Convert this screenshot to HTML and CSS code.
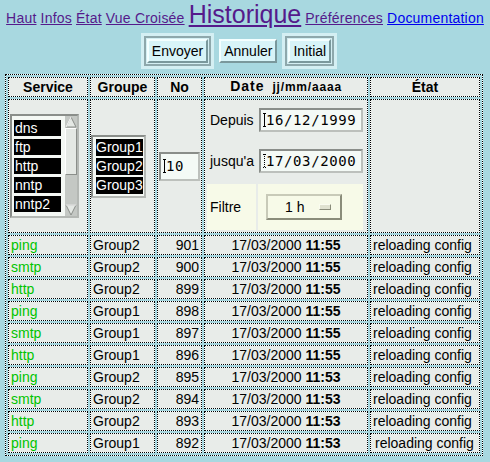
FILE: index.html
```html
<!DOCTYPE html>
<html lang="fr">
<head>
    <meta charset="UTF-8">
    <title>Historique</title>
    <link rel="stylesheet" href="styles.css">
</head>
<body>
    <div class="nav">
        <a href="#">Haut</a> <a href="#">Infos</a> <a href="#">État</a> <a href="#">Vue Croisée</a> <a href="#" class="current">Historique</a> <a href="#">Préférences</a> <a href="#" class="fresh">Documentation</a>
    </div>

    <form class="actions">
        <span class="frame"><span class="ring"><button type="submit">Envoyer</button></span></span>
        <button type="button">Annuler</button>
        <span class="frame"><span class="ring"><button type="reset">Initial</button></span></span>
    </form>

    <table class="histo">
        <colgroup>
            <col style="width: 80px">
            <col style="width: 65px">
            <col style="width: 45px">
            <col style="width: 164px">
            <col style="width: 110px">
        </colgroup>
        <thead>
            <tr>
                <th>Service</th>
                <th>Groupe</th>
                <th>No</th>
                <th><span class="date-title">Date</span><span class="fmt">jj/mm/aaaa</span></th>
                <th>État</th>
            </tr>
        </thead>
        <tbody>
            <tr class="filters">
                <td>
                    <div class="listbox">
                        <div class="opts">
                            <span>dns</span>
                            <span>ftp</span>
                            <span>http</span>
                            <span>nntp</span>
                            <span>nntp2</span>
                        </div>
                        <div class="scroll">
                            <svg class="arrow" width="12" height="12" viewBox="0 0 12 12"><polygon points="6,1 11,11 1,11" fill="#e4e8e4" stroke="#8a8e8a"/><line x1="6" y1="1" x2="1" y2="11" stroke="#fff"/></svg>
                            <div class="track"><div class="thumb"></div></div>
                            <svg class="arrow" width="12" height="12" viewBox="0 0 12 12"><polygon points="1,1 11,1 6,11" fill="#e4e8e4" stroke="#8a8e8a"/><line x1="1" y1="1" x2="11" y2="1" stroke="#fff"/></svg>
                        </div>
                    </div>
                </td>
                <td class="groups-cell">
                    <div class="listbox groups">
                        <div class="opts">
                            <span>Group1</span>
                            <span>Group2</span>
                            <span>Group3</span>
                        </div>
                    </div>
                </td>
                <td>
                    <div class="field count"><i class="caret"></i>10</div>
                </td>
                <td class="period-cell">
                    <table class="period">
                        <tr class="r1">
                            <td class="lbl">Depuis</td>
                            <td class="fld"><div class="field date"><i class="caret"></i>16/12/1999</div></td>
                        </tr>
                        <tr class="r2">
                            <td class="lbl">jusqu'a</td>
                            <td class="fld"><div class="field date"><i class="caret idle"></i>17/03/2000</div></td>
                        </tr>
                        <tr class="r3">
                            <td class="lbl">Filtre</td>
                            <td class="fld"><span class="menu">1 h<i class="ind"></i></span></td>
                        </tr>
                    </table>
                </td>
                <td></td>
            </tr>
            <tr><td class="svc">ping</td><td>Group2</td><td class="num">901</td><td class="when">17/03/2000 <b>11:55</b></td><td>reloading config</td></tr>
            <tr><td class="svc">smtp</td><td>Group2</td><td class="num">900</td><td class="when">17/03/2000 <b>11:55</b></td><td>reloading config</td></tr>
            <tr><td class="svc">http</td><td>Group2</td><td class="num">899</td><td class="when">17/03/2000 <b>11:55</b></td><td>reloading config</td></tr>
            <tr><td class="svc">ping</td><td>Group1</td><td class="num">898</td><td class="when">17/03/2000 <b>11:55</b></td><td>reloading config</td></tr>
            <tr><td class="svc">smtp</td><td>Group1</td><td class="num">897</td><td class="when">17/03/2000 <b>11:55</b></td><td>reloading config</td></tr>
            <tr><td class="svc">http</td><td>Group1</td><td class="num">896</td><td class="when">17/03/2000 <b>11:55</b></td><td>reloading config</td></tr>
            <tr><td class="svc">ping</td><td>Group2</td><td class="num">895</td><td class="when">17/03/2000 <b>11:53</b></td><td>reloading config</td></tr>
            <tr><td class="svc">smtp</td><td>Group2</td><td class="num">894</td><td class="when">17/03/2000 <b>11:53</b></td><td>reloading config</td></tr>
            <tr><td class="svc">http</td><td>Group2</td><td class="num">893</td><td class="when">17/03/2000 <b>11:53</b></td><td>reloading config</td></tr>
            <tr><td class="svc">ping</td><td>Group1</td><td class="num">892</td><td class="when">17/03/2000 <b>11:53</b></td><td class="last">reloading config</td></tr>
        </tbody>
    </table>
</body>
</html>
```

FILE: styles.css
```css
* {
    box-sizing: border-box;
}
body {
    margin: 0 5px;
    background-color: #a8d8e0;
    color: #000;
    font-family: "Liberation Sans", Arial, sans-serif;
    font-size: 14px;
}

/* barre de navigation */
.nav {
    height: 28px;
    text-align: center;
    white-space: nowrap;
    letter-spacing: 0.2px;
}
.nav a {
    color: #551a8b;
}
.nav a.fresh {
    color: #0000ee;
}
.nav a.current {
    font-size: 25px;
    letter-spacing: 0;
}

/* boutons */
.actions {
    display: flex;
    justify-content: center;
    align-items: center;
    gap: 5px;
    margin-top: 5px;
    padding-right: 12px;
}
.frame {
    display: block;
    padding: 3px;
    background-color: #d4eff3;
}
.ring {
    display: flex;
    padding: 1px;
    border: 2px solid #8ea8ac;
}
button {
    height: 24px;
    padding: 0 3px;
    font-family: inherit;
    font-size: 14px;
    color: #000;
    background-color: #d8f4f8;
    border: 2px solid;
    border-color: #f4ffff #7a989c #7a989c #f4ffff;
    border-radius: 0;
}

/* tableau */
.histo {
    width: 478px;
    margin-top: 5px;
    table-layout: fixed;
    border-collapse: separate;
    border-spacing: 2px;
    border: 1px dotted #000;
    background: linear-gradient(#a8d8e0, #a8d8e0) padding-box, #fff;
}
.histo th,
.histo td {
    padding: 0 2px;
    border: 1px dotted #000;
    background: linear-gradient(#e8ece9, #e8ece9) padding-box, #fff;
    line-height: 18px;
    white-space: nowrap;
    text-align: left;
}
.histo th {
    line-height: 17px;
    text-align: center;
}
.date-title {
    letter-spacing: 1px;
}
.fmt {
    margin-left: 8px;
    font-size: 12px;
    letter-spacing: 0.8px;
}
.svc {
    color: #00c400;
}
.histo .num {
    text-align: right;
}
.histo .when {
    text-align: center;
}
.histo .last {
    padding-left: 4px;
}

/* ligne de filtres */
.histo .filters > td {
    height: 134px;
    padding: 0 1px;
    vertical-align: middle;
}
.histo .filters > td.groups-cell,
.histo .filters > td.period-cell {
    padding: 0;
}
.listbox {
    display: inline-flex;
    border: 2px solid;
    border-color: #8a8e8a #b4b8b4 #b4b8b4 #8a8e8a;
    background-color: #f4f8f4;
    vertical-align: middle;
}
.opts {
    display: flex;
    flex-direction: column;
    gap: 3px;
    padding: 4px 4px 4px 2px;
}
.opts span {
    width: 47px;
    height: 16px;
    padding-left: 1px;
    line-height: 16px;
    background-color: #000;
    color: #fff;
}
.groups .opts {
    gap: 2px;
    padding: 2px 1px 2px 3px;
}
.groups .opts span {
    height: 17px;
    padding-left: 0;
    line-height: 17px;
}
.scroll {
    display: flex;
    flex-direction: column;
    width: 12px;
    background-color: #c4c8c4;
}
.arrow {
    display: block;
}
.track {
    flex: 1;
}
.thumb {
    height: 47px;
    border: 1px solid;
    border-color: #fff #8a8e8a #8a8e8a #fff;
    background-color: #e4e8e4;
}

/* champs */
.field {
    display: flex;
    align-items: center;
    height: 24px;
    padding-left: 2px;
    border: 2px solid;
    border-color: #8a8e8a #bcc0bc #bcc0bc #8a8e8a;
    background-color: #f4faf6;
    font-family: "DejaVu Sans Mono", monospace;
    font-size: 14px;
    letter-spacing: 0.6px;
}
.field.date {
    width: 104px;
}
.field.count {
    width: 41px;
    height: 29px;
}
.caret {
    width: 3px;
    height: 14px;
    flex: none;
    background:
        linear-gradient(#000, #000) center / 1px 100% no-repeat,
        linear-gradient(#000, #000) top / 3px 1px no-repeat,
        linear-gradient(#000, #000) bottom / 3px 1px no-repeat;
}
.caret.idle {
    background:
        repeating-linear-gradient(#000 0 1px, transparent 1px 2px) center / 1px 100% no-repeat,
        linear-gradient(90deg, #000 0 1px, transparent 1px 2px, #000 2px) top / 3px 1px no-repeat,
        linear-gradient(90deg, #000 0 1px, transparent 1px 2px, #000 2px) bottom / 3px 1px no-repeat;
}

/* periode */
.period {
    width: 160px;
    table-layout: fixed;
    border-collapse: separate;
    border-spacing: 2px;
}
.histo .period td {
    padding: 0;
    border: none;
    background: none;
    line-height: normal;
}
.histo .period .lbl {
    width: 49px;
    padding-left: 3px;
}
.histo .period .fld {
    width: 105px;
    padding-left: 1px;
}
.histo .period .r1 td {
    height: 36px;
}
.histo .period .r2 td {
    height: 42px;
}
.histo .period .r3 td {
    height: 46px;
    background-color: #f7fae8;
}
.menu {
    display: inline-flex;
    align-items: center;
    width: 76px;
    height: 26px;
    margin-left: 7px;
    padding-left: 17px;
    border: 2px solid;
    border-color: #c8cab8 #8a8c7a #8a8c7a #c8cab8;
    vertical-align: middle;
}
.ind {
    width: 12px;
    height: 6px;
    margin-left: 15px;
    border: 1px solid;
    border-color: #fafcf0 #8a8c7a #8a8c7a #fafcf0;
    background-color: #e0e2d0;
}
```
